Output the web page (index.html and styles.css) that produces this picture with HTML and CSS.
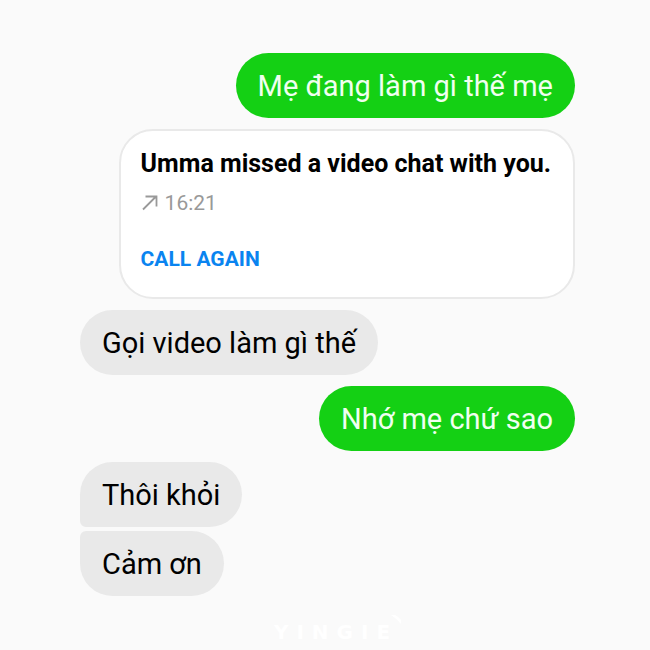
FILE: index.html
```html
<!DOCTYPE html>
<html lang="vi">
<head>
<meta charset="utf-8">
<meta name="viewport" content="width=device-width, initial-scale=1">
<title>Chat</title>
<link rel="stylesheet" href="styles.css">
</head>
<body>
<main class="chat">
  <p class="bubble sent">Mẹ đang làm gì thế mẹ</p>
  <section class="card" lang="en">
    <h1 class="card-title">Umma missed a video chat with you.</h1>
    <p class="card-time">
      <svg class="arrow" viewBox="0 0 18 18" aria-hidden="true"><path d="M2 15.500 14.500 3M4.500 2.500H15.500V12.500" fill="none" stroke="currentColor" stroke-width="1.800"/></svg>
      <time>16:21</time>
    </p>
    <button class="call" type="button">CALL AGAIN</button>
  </section>
  <p class="bubble received">Gọi video làm gì thế</p>
  <p class="bubble sent">Nhớ mẹ chứ sao</p>
  <div class="group">
    <p class="bubble received first">Thôi khỏi</p>
    <p class="bubble received last">Cảm ơn</p>
  </div>
</main>
<footer class="brand">
  <span class="brand-name">YINGIE</span>
  <svg class="brand-mark" viewBox="0 0 12 12" aria-hidden="true"><path d="M1 1H5Q9 3 11 6V10Q6 4 1 1Z" fill="currentColor"/></svg>
</footer>
</body>
</html>
```

FILE: styles.css
```css
* {
  box-sizing: border-box;
}

body {
  margin: 0;
  background: #fafafa;
  color: #000;
  font-family: Roboto, "Liberation Sans", sans-serif;
}

.chat {
  display: flex;
  flex-direction: column;
  gap: 11px;
  padding: 53px 75px 0 80px;
}

.bubble {
  margin: 0;
  padding: 13px 22px 12px;
  border-radius: 33px;
  font-size: 29px;
  line-height: 40px;
}

.sent {
  align-self: flex-end;
  background: #14d014;
  color: #f0fff0;
}

.received {
  align-self: flex-start;
  background: #e9e9e9;
}

.group {
  display: flex;
  flex-direction: column;
  gap: 4px;
}

.first {
  border-bottom-left-radius: 6px;
}

.last {
  border-top-left-radius: 6px;
}

.card {
  align-self: flex-end;
  padding: 17px 22px 22px 20px;
  border: 2px solid #e9e9e9;
  border-radius: 34px;
  background: #fff;
}

.card-title {
  margin: 0;
  font-size: 25px;
  font-weight: 700;
  line-height: 32px;
}

.card-time {
  display: flex;
  align-items: center;
  gap: 6px;
  margin: 7px 0 24px;
  color: #999;
  font-size: 21px;
  line-height: 32px;
}

.arrow {
  width: 18px;
  height: 18px;
}

.call {
  display: block;
  padding: 0;
  border: 0;
  background: none;
  color: #0a84f0;
  font-family: inherit;
  font-size: 21px;
  font-weight: 700;
  line-height: 32px;
}

.brand {
  display: flex;
  justify-content: center;
  padding: 18px 0 0 26px;
  color: #fff;
}

.brand-name {
  padding-top: 6px;
  font-family: "DejaVu Sans", sans-serif;
  font-size: 20px;
  font-weight: 700;
  letter-spacing: 8px;
  line-height: 24px;
}

.brand-mark {
  width: 12px;
  height: 12px;
  margin-left: -8px;
}
```
